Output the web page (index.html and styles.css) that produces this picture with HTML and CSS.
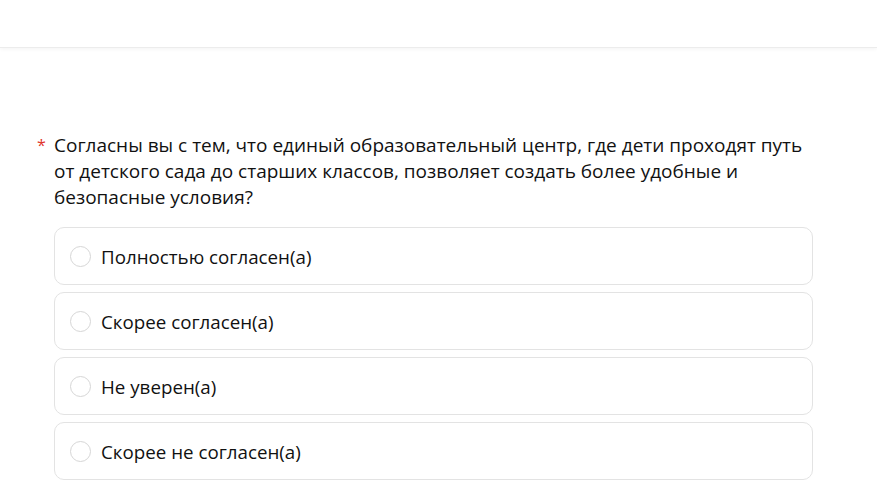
FILE: index.html
```html
<!DOCTYPE html>
<html lang="ru">
<head>
  <meta charset="UTF-8">
  <title>Опрос</title>
  <link rel="stylesheet" href="styles.css">
</head>
<body>

<header class="top-bar"></header>

<div class="question">
  <div class="question-title">
    <span class="required">*</span>
    <span class="question-text">Согласны вы с тем, что единый образовательный центр, где дети проходят путь от детского сада до старших классов, позволяет создать более удобные и безопасные условия?</span>
  </div>
  <div class="options">
    <label class="option"><span class="radio"></span>Полностью согласен(а)</label>
    <label class="option"><span class="radio"></span>Скорее согласен(а)</label>
    <label class="option"><span class="radio"></span>Не уверен(а)</label>
    <label class="option"><span class="radio"></span>Скорее не согласен(а)</label>
  </div>
</div>

</body>
</html>
```

FILE: styles.css
```css
body {
  margin: 0;
  padding: 0;
  background-color: #fff;
  font-family: "Open Sans", "Noto Sans", sans-serif;
  color: #111;
}
.top-bar {
  height: 47px;
  background-color: #fff;
  border-bottom: 1px solid #ececec;
  box-shadow: 0 1px 4px rgba(0, 0, 0, 0.05);
}
.question {
  padding: 84px 0 0 37px;
}
.question-title {
  display: flex;
  font-size: 19px;
  line-height: 26px;
}
.required {
  color: #e0352b;
  width: 17px;
  flex-shrink: 0;
  font-size: 16px;
}
.question-text {
  max-width: 750px;
}
.options {
  margin: 17px 0 0 17px;
  width: 759px;
  display: flex;
  flex-direction: column;
  gap: 7px;
}
.option {
  display: flex;
  align-items: center;
  height: 56px;
  padding: 0 15px;
  border: 1px solid #e3e3e3;
  border-radius: 10px;
  font-size: 18.75px;
  cursor: pointer;
}
.radio {
  width: 19px;
  height: 19px;
  border: 1px solid #d6d6d6;
  border-radius: 50%;
  margin-right: 10px;
  flex-shrink: 0;
}
```
